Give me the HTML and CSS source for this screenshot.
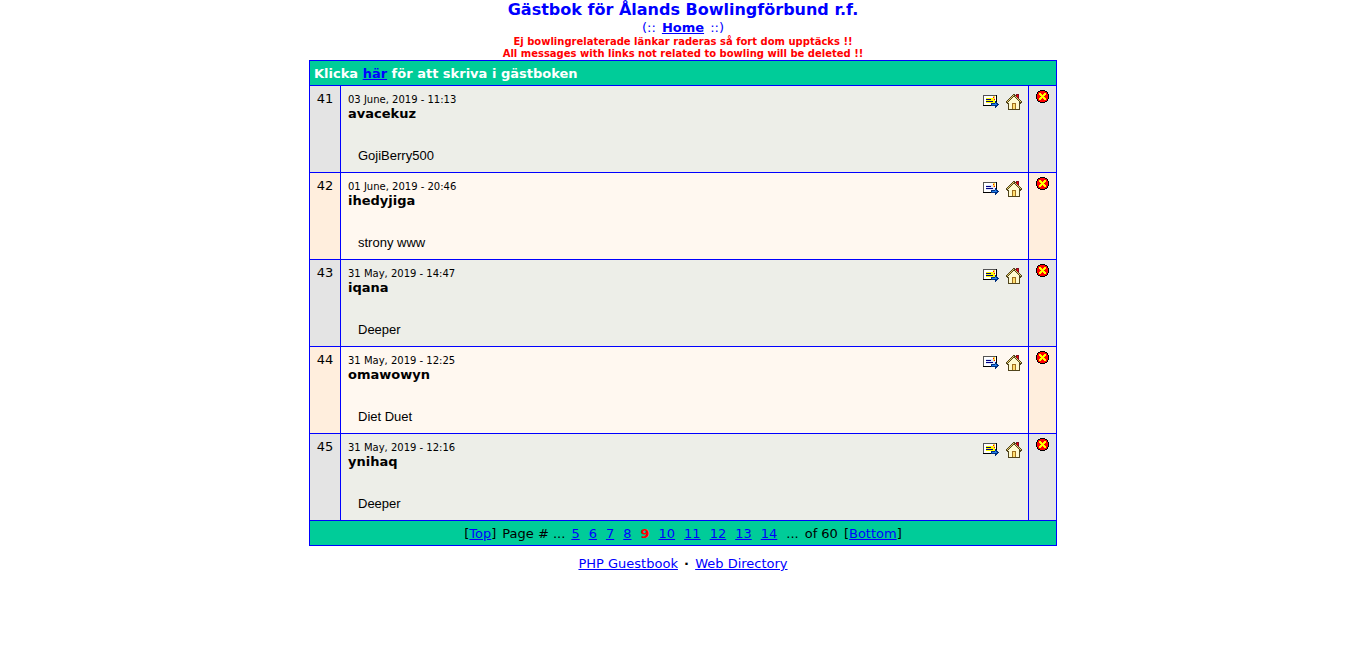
FILE: index.html
```html
<!DOCTYPE html>
<html lang="sv">
<head>
<meta charset="utf-8">
<title>Gästbok för Ålands Bowlingförbund r.f.</title>
<link rel="stylesheet" href="styles.css">
</head>
<body>
<svg class="symbols" aria-hidden="true">
  <symbol id="letter" viewBox="0 0 16 14">
    <path class="ink" d="M0 1h14v11H0z"/>
    <path class="paper" d="M1 2h12v9H1z"/>
    <path class="shade" d="M0 1h1v10H0zM0 1h13v1H0z"/>
    <path class="stamp" d="M3 4h9v5H3z"/>
    <path class="lines" d="M3 5h5v1H3zM3 7h7v1H3z"/>
    <path class="gold" d="M10 2h2v4h-2z"/>
    <path class="red" d="M10 3h1v1h-1zM11 5h1v1h-1z"/>
    <path class="navy" d="M8 9h4V7h1v1h1v1h1v1h1v1h-1v1h-1v1h-1v1h-1v-2H8z"/>
    <path class="blue" d="M9 10h3V9h1v1h1v1H9z"/>
  </symbol>
  <symbol id="house" viewBox="0 0 16 16">
    <path class="wall" d="M8 3l5 5v7H2V8z"/>
    <path class="outline" d="M7 0h2v1h1v1h1v1h1v1h1v1h1v1h1v1h1v2h-1v1h-1V8h-1V7h-1V6h-1V5h-1V4H9V3H7v1H6v1H5v1H4v1H3v1H2v2H1V9H0V7h1V6h1V5h1V4h1V3h1V2h1V1h1z"/>
    <path class="brick" d="M10 0h3v5h-1V4h-1V3h-1z"/>
    <path class="red" d="M11 1h1v2h-1z"/>
    <path class="roof" d="M7 1h1v1H7v1H6v1H5v1H4v1H3v1H2v1H1V7h1V6h1V5h1V4h1V3h1V2h1zM9 2h1v1H9zM10 3h1v1h-1zM11 4h1v1h-1zM12 5h1v1h-1zM13 6h1v1h-1zM14 7h1v1h-1z"/>
    <path class="outline" d="M2 9h1v6H2zM13 8h1v7h-1zM2 15h12v1H2z"/>
    <path class="frame" d="M6 9h4v6H6z"/>
    <path class="door" d="M7 10h2v5H7z"/>
  </symbol>
  <symbol id="remove" viewBox="0 0 13 13">
    <path class="black" d="M4 0h5v1h2v1h1v2h1v5h-1v2h-1v1H9v1H4v-1H2v-1H1V9H0V4h1V2h1V1h2z"/>
    <path class="red" d="M4 1h5v1h2v2h1v5h-1v2H9v1H4v-1H2V9H1V4h1V2h2z"/>
    <path class="cross" d="M3 3h2v1h1v1h1V4h1V3h2v2H9v1H8v1h1v1h1v2H8V9H7V8H6v1H5v1H3V8h1V7h1V6H4V5H3z"/>
  </symbol>
</svg>
<header class="masthead">
  <h1>Gästbok för Ålands Bowlingförbund r.f.</h1>
  <nav class="home">(:: <a href="#home">Home</a> ::)</nav>
  <p class="warning">Ej bowlingrelaterade länkar raderas så fort dom upptäcks !!<br>All messages with links not related to bowling will be deleted !!</p>
</header>
<table class="guestbook">
  <colgroup><col class="col-number"><col><col class="col-remove"></colgroup>
  <thead>
    <tr><th class="bar sign" colspan="3">Klicka <a href="#sign">här</a> för att skriva i gästboken</th></tr>
  </thead>
  <tbody>
    <tr class="entry">
      <td class="number">41</td>
      <td class="post"><div class="head"><div><div class="date">03 June, 2019 - 11:13</div><div class="name">avacekuz</div></div><div class="links"><a class="marked" href="#mail41" aria-label="Email"><svg class="mail"><use href="#letter"/></svg></a><a href="#web41" aria-label="Homepage"><svg class="web"><use href="#house"/></svg></a></div></div><p class="message">GojiBerry500</p></td>
      <td class="remove"><a href="#remove41" aria-label="Delete"><svg class="cancel"><use href="#remove"/></svg></a></td>
    </tr>
    <tr class="entry">
      <td class="number">42</td>
      <td class="post"><div class="head"><div><div class="date">01 June, 2019 - 20:46</div><div class="name">ihedyjiga</div></div><div class="links"><a href="#mail42" aria-label="Email"><svg class="mail"><use href="#letter"/></svg></a><a href="#web42" aria-label="Homepage"><svg class="web"><use href="#house"/></svg></a></div></div><p class="message">strony www</p></td>
      <td class="remove"><a href="#remove42" aria-label="Delete"><svg class="cancel"><use href="#remove"/></svg></a></td>
    </tr>
    <tr class="entry">
      <td class="number">43</td>
      <td class="post"><div class="head"><div><div class="date">31 May, 2019 - 14:47</div><div class="name">iqana</div></div><div class="links"><a class="marked" href="#mail43" aria-label="Email"><svg class="mail"><use href="#letter"/></svg></a><a href="#web43" aria-label="Homepage"><svg class="web"><use href="#house"/></svg></a></div></div><p class="message">Deeper</p></td>
      <td class="remove"><a href="#remove43" aria-label="Delete"><svg class="cancel"><use href="#remove"/></svg></a></td>
    </tr>
    <tr class="entry">
      <td class="number">44</td>
      <td class="post"><div class="head"><div><div class="date">31 May, 2019 - 12:25</div><div class="name">omawowyn</div></div><div class="links"><a href="#mail44" aria-label="Email"><svg class="mail"><use href="#letter"/></svg></a><a href="#web44" aria-label="Homepage"><svg class="web"><use href="#house"/></svg></a></div></div><p class="message">Diet Duet</p></td>
      <td class="remove"><a href="#remove44" aria-label="Delete"><svg class="cancel"><use href="#remove"/></svg></a></td>
    </tr>
    <tr class="entry">
      <td class="number">45</td>
      <td class="post"><div class="head"><div><div class="date">31 May, 2019 - 12:16</div><div class="name">ynihaq</div></div><div class="links"><a class="marked" href="#mail45" aria-label="Email"><svg class="mail"><use href="#letter"/></svg></a><a href="#web45" aria-label="Homepage"><svg class="web"><use href="#house"/></svg></a></div></div><p class="message">Deeper</p></td>
      <td class="remove"><a href="#remove45" aria-label="Delete"><svg class="cancel"><use href="#remove"/></svg></a></td>
    </tr>
  </tbody>
  <tfoot>
    <tr><td class="bar" colspan="3"><div class="pager"><span>[<a href="#top">Top</a>]</span> <span>Page # ...</span> <span class="pages"><a href="#p5">5</a> <a href="#p6">6</a> <a href="#p7">7</a> <a href="#p8">8</a> <b>9</b> <a href="#p10">10</a> <a href="#p11">11</a> <a href="#p12">12</a> <a href="#p13">13</a> <a href="#p14">14</a> <span>...</span></span> <span>of 60</span> <span>[<a href="#bottom">Bottom</a>]</span></div></td></tr>
  </tfoot>
</table>
<footer class="credits"><a href="#php">PHP Guestbook</a> <b>·</b> <a href="#directory">Web Directory</a></footer>
</body>
</html>
```

FILE: styles.css
```css
body {
  margin: 0;
  padding-left: 17px;
  background: #fff;
  color: #000;
  font: 13px/16px Verdana, "DejaVu Sans", sans-serif;
}
a { color: #00f; }
.symbols { display: none; }
.masthead { text-align: center; color: #00f; }
.masthead h1 { margin: 0; font-size: 16px; line-height: 20px; }
.home a { margin: 0 2px; font-weight: bold; }
.warning {
  margin: 0;
  color: #f00;
  font-size: 10px;
  font-weight: bold;
  line-height: 12px;
}
.guestbook {
  width: 100%;
  max-width: 748px;
  margin: 0 auto;
  border-collapse: collapse;
  table-layout: fixed;
}
.col-number { width: 31px; }
.col-remove { width: 28px; }
.guestbook th, .guestbook td { border: 1px solid #00f; vertical-align: top; }
.guestbook .bar { padding: 5px 4px 3px; background: #00cc99; }
.sign { color: #fff; text-align: left; }
.pager { display: flex; flex-wrap: wrap; justify-content: center; gap: 0 6px; }
.pages { display: flex; flex-wrap: wrap; gap: 0 9px; }
.pager b { color: #f00; }
.entry td { background: #ffeedd; }
.entry .post { padding: 8px 6px 8px 7px; background: #fff8f0; }
.entry:nth-child(odd) td { background: #e4e4e4; }
.entry:nth-child(odd) .post { background: #edeee8; }
.guestbook .number { padding: 5px 0; text-align: center; }
.guestbook .remove { padding: 4px 0; text-align: center; }
.head { display: flex; justify-content: space-between; }
.date { font-size: 10px; line-height: 12px; }
.name { font-weight: bold; }
.links { display: flex; gap: 7px; }
.message {
  margin: 26px 10px 0;
  font-family: Arial, "Liberation Sans", sans-serif;
}
.links svg, .cancel { display: block; shape-rendering: crispEdges; }
.mail { width: 16px; height: 14px; }
.web { width: 16px; height: 16px; }
.cancel { width: 13px; height: 13px; margin: 0 auto; }
.ink, .black { fill: #000; }
.paper { fill: #fff; }
.shade { fill: #555; }
.lines { fill: #000080; }
.marked { --stamp: #ff0; }
.stamp { fill: var(--stamp, #dfe6ff); }
.gold { fill: #ffe040; }
.red { fill: #f00; }
.navy { fill: #003080; }
.blue { fill: #2080f0; }
.wall { fill: #fffbd0; }
.outline { fill: #50441c; }
.roof { fill: #e8d070; }
.brick { fill: #801020; }
.frame { fill: #a07020; }
.door { fill: #ffe070; }
.cross { fill: #ff0; }
.credits { padding-top: 10px; text-align: center; }
.credits b { margin: 0 2px; }
```
